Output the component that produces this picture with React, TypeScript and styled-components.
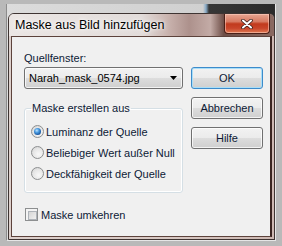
import styled, { createGlobalStyle } from 'styled-components';

const GlobalStyle = createGlobalStyle`
  html,
  body {
    margin: 0;
    padding: 0;
    width: 282px;
    height: 246px;
    overflow: hidden;
    background: #b9b9b9;
  }

  * {
    box-sizing: border-box;
  }
`;

const options = [
  'Luminanz der Quelle',
  'Beliebiger Wert außer Null',
  'Deckfähigkeit der Quelle',
];

const App = () => {
  return (
    <>
      <GlobalStyle />
      <Frame>
        <Desktop>
          <Window>
            <TitleBar>
              <Title>Maske aus Bild hinzufügen</Title>
              <CloseButton>
                <svg width="12" height="10" viewBox="0 0 12 10">
                  <path
                    d="M2 1.5 L10 8.5 M10 1.5 L2 8.5"
                    stroke="#3a1f1a"
                    strokeWidth="3.6"
                    strokeLinecap="round"
                  />
                  <path
                    d="M2 1.5 L10 8.5 M10 1.5 L2 8.5"
                    stroke="#ffffff"
                    strokeWidth="2"
                    strokeLinecap="round"
                  />
                </svg>
              </CloseButton>
            </TitleBar>

            <Client>
              <TopRow>
                <LeftColumn>
                  <Label>Quellfenster:</Label>
                  <Dropdown>
                    <span>Narah_mask_0574.jpg</span>
                    <svg width="7" height="4" viewBox="0 0 7 4">
                      <path d="M0 0 H7 L3.5 4 Z" fill="#000" />
                    </svg>
                  </Dropdown>

                  <GroupBox>
                    <Legend>Maske erstellen aus</Legend>
                    {options.map((text, index) => (
                      <OptionRow key={text}>
                        <RadioCircle $checked={index === 0} />
                        <OptionText>{text}</OptionText>
                      </OptionRow>
                    ))}
                  </GroupBox>
                </LeftColumn>

                <ButtonColumn>
                  <DialogButton $isDefault>OK</DialogButton>
                  <DialogButton>Abbrechen</DialogButton>
                  <DialogButton>Hilfe</DialogButton>
                </ButtonColumn>
              </TopRow>

              <CheckRow>
                <CheckBox />
                <OptionText>Maske umkehren</OptionText>
              </CheckRow>
            </Client>
          </Window>
        </Desktop>
      </Frame>
    </>
  );
};

const Frame = styled.div`
  width: 282px;
  height: 246px;
  padding: 4px 6px 5px 6px;
  background: #b9b9b9;
  display: flex;
`;

const Desktop = styled.div`
  flex: 1;
  display: flex;
  flex-direction: column;
  padding: 9px 0 0 1px;
  border-left: 1px solid #8c8c8c;
  border-right: 1px solid #e6e6e6;
  border-bottom: 1px solid #e6e6e6;
  background: linear-gradient(
    90deg,
    #dcdcdc 0,
    #d0d0d0 196px,
    #86a9c6 199px,
    #363636 202px,
    #2b2b2b 100%
  );
`;

const Window = styled.div`
  flex: 1;
  display: flex;
  flex-direction: column;
  padding: 0 2px 2px 2px;
  border: 1px solid #3e3432;
  border-radius: 6px 6px 0 0;
  background: linear-gradient(90deg, #ddd0cc 0%, #d8c8c3 60%, #cdb8b2 100%);
  overflow: hidden;
`;

const TitleBar = styled.div`
  height: 22px;
  margin: 0 -2px;
  padding: 0 4px 0 6px;
  display: flex;
  align-items: flex-start;
  justify-content: space-between;
  background: linear-gradient(
    90deg,
    #ebe6e4 0%,
    #e2dcda 50%,
    #c9b3ae 60%,
    #ad918c 68%,
    #c3aba6 76%,
    #6e4e47 81%,
    #8a6a62 100%
  );
`;

const Title = styled.span`
  font-family: 'Liberation Sans', Arial, sans-serif;
  font-size: 12.5px;
  line-height: 22px;
  color: #000;
  text-shadow: 0 0 6px #ffffff, 0 0 3px #ffffff;
`;

const CloseButton = styled.div`
  width: 46px;
  height: 20px;
  display: flex;
  align-items: center;
  justify-content: center;
  border: 1px solid #4a1f17;
  border-top: none;
  border-radius: 0 0 4px 4px;
  background: linear-gradient(
    180deg,
    #e7a692 0%,
    #d77a62 40%,
    #c13a1d 52%,
    #c8452a 75%,
    #e07a52 100%
  );
  box-shadow: inset 0 0 0 1px rgba(255, 210, 195, 0.55);
`;

const Client = styled.div`
  flex: 1;
  display: flex;
  flex-direction: column;
  padding: 13px 7px 0 12px;
  border: 1px solid #5c423b;
  border-right: 2px solid #3a2521;
  background: #f0f0f0;
  font-family: 'Liberation Sans', Arial, sans-serif;
  font-size: 11px;
  color: #0d1a36;
`;

const TopRow = styled.div`
  display: flex;
  align-items: flex-start;
  gap: 8px;
`;

const LeftColumn = styled.div`
  width: 159px;
  display: flex;
  flex-direction: column;
`;

const Label = styled.div`
  height: 17px;
  line-height: 16px;
`;

const Dropdown = styled.div`
  height: 22px;
  padding: 0 5px 0 4px;
  display: flex;
  align-items: center;
  justify-content: space-between;
  border: 1px solid #707070;
  border-radius: 3px;
  background: linear-gradient(
    180deg,
    #f2f2f2 0%,
    #ebebeb 50%,
    #dddddd 51%,
    #cfcfcf 100%
  );
  box-shadow: inset 0 0 0 1px rgba(255, 255, 255, 0.75);
  color: #000;
`;

const GroupBox = styled.fieldset`
  margin: 12px 0 0 0;
  padding: 6px 0 8px 6px;
  border: 1px solid #d5dfe5;
  border-radius: 3px;
  box-shadow: inset 0 0 0 1px #ffffff;
  min-width: 0;
`;

const Legend = styled.legend`
  padding: 0 1px;
  line-height: 14px;
  font-size: 11px;
`;

const OptionRow = styled.div`
  height: 21px;
  display: flex;
  align-items: center;
  gap: 2px;
`;

const OptionText = styled.span`
  line-height: 14px;
`;

const RadioCircle = styled.span<{ $checked?: boolean }>`
  position: relative;
  width: 13px;
  height: 13px;
  flex: none;
  border-radius: 50%;
  border: 1px solid #8d8f90;
  background: radial-gradient(circle at 60% 65%, #f8f8f8 0%, #e6e6e6 55%, #cdcdcd 100%);

  &::after {
    content: '';
    display: ${(props) => (props.$checked ? 'block' : 'none')};
    position: absolute;
    left: 2px;
    top: 2px;
    width: 7px;
    height: 7px;
    border-radius: 50%;
    background: radial-gradient(
      circle at 40% 35%,
      #bfe4ff 0%,
      #4a9be0 35%,
      #14509a 75%,
      #0b3a74 100%
    );
  }
`;

const ButtonColumn = styled.div`
  width: 72px;
  padding-top: 17px;
  display: flex;
  flex-direction: column;
  gap: 8px;
`;

const DialogButton = styled.div<{ $isDefault?: boolean }>`
  height: 22px;
  display: flex;
  align-items: center;
  justify-content: center;
  border: 1px solid ${(props) => (props.$isDefault ? '#3c8bcb' : '#707070')};
  border-radius: 3px;
  background: linear-gradient(
    180deg,
    #f2f2f2 0%,
    #ebebeb 50%,
    #dddddd 51%,
    #cfcfcf 100%
  );
  box-shadow: inset 0 0 0 1px
    ${(props) => (props.$isDefault ? '#a9def8' : 'rgba(255, 255, 255, 0.75)')};
  color: #0d1a36;
`;

const CheckRow = styled.div`
  height: 21px;
  margin: 11px 0 0 1px;
  display: flex;
  align-items: center;
  gap: 3px;
`;

const CheckBox = styled.span`
  width: 13px;
  height: 13px;
  flex: none;
  border: 1px solid #8d8f90;
  padding: 2px;
  background: #f4f4f4;

  &::after {
    content: '';
    display: block;
    width: 100%;
    height: 100%;
    border: 1px solid #aeb3b9;
    background: linear-gradient(135deg, #d6d6d6 0%, #f0f0f0 100%);
  }
`;

export default App;
